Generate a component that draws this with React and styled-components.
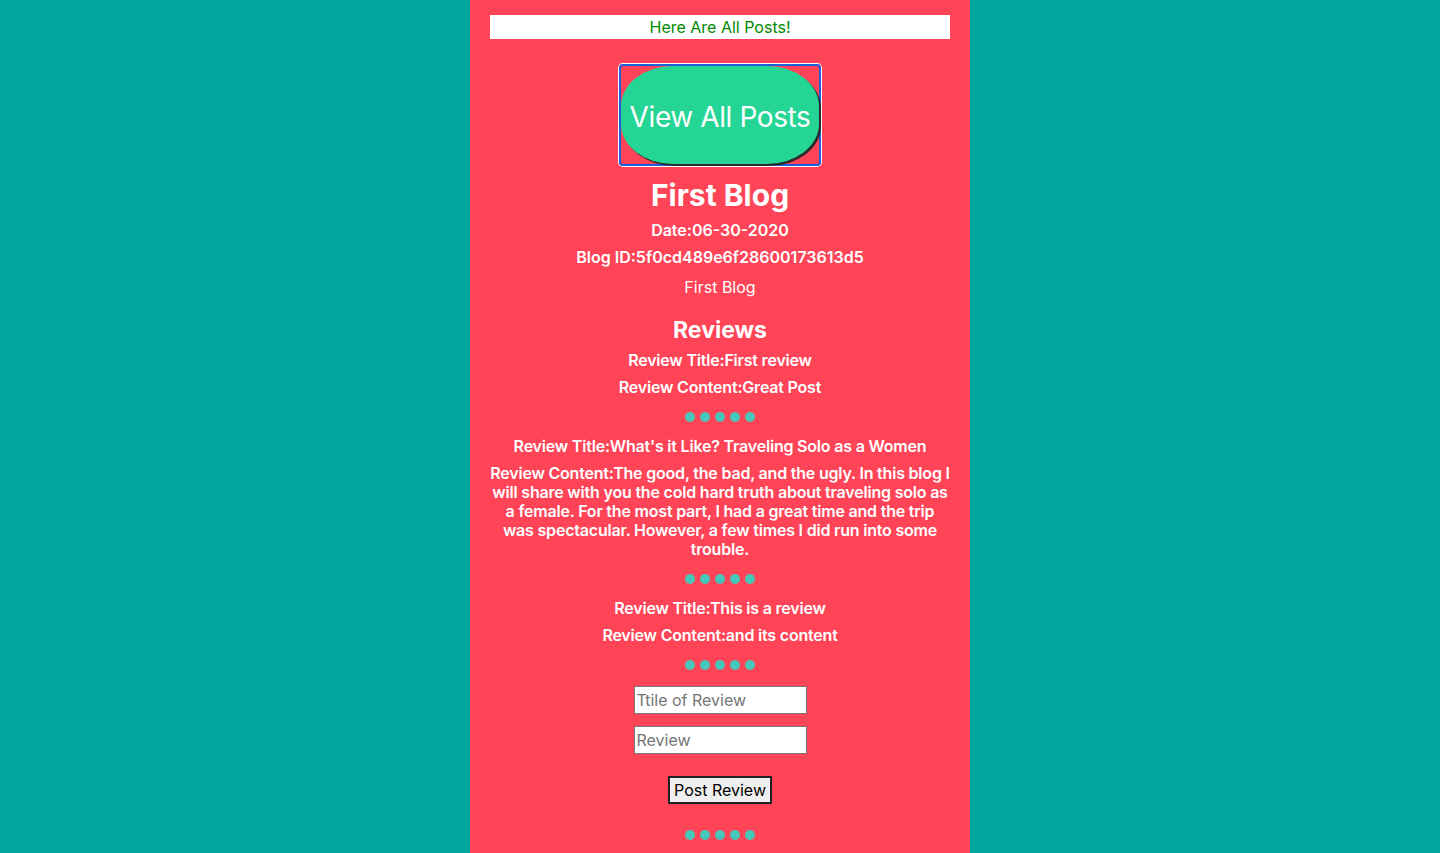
import styled, { createGlobalStyle } from 'styled-components';

const GlobalStyle = createGlobalStyle`
    html, body {
        margin: 0;
        padding: 0;
        background-color: #00a69d;
        font-family: Inter, "Noto Sans", sans-serif;
    }
`;

const Column = styled.main`
    width: 500px;
    min-height: 853px;
    margin: 0 auto;
    padding: 15px 20px 10px;
    box-sizing: border-box;
    background-color: #ff4457;
    display: flex;
    flex-direction: column;
    align-items: center;
    text-align: center;
    color: #ffffff;
`;

const Banner = styled.div`
    width: 100%;
    height: 24px;
    line-height: 24px;
    background-color: #ffffff;
    color: #008a00;
    font-size: 16px;
`;

const FocusRing = styled.div`
    margin-top: 25px;
    padding: 0;
    border: 2px solid #1d5fd8;
    border-radius: 4px;
    box-shadow: 0 0 0 1px #ffffff;
    display: flex;
`;

const ViewButton = styled.button`
    width: 198px;
    height: 98px;
    border: none;
    border-radius: 52px / 40px;
    background-color: #25d595;
    box-shadow: 2px 2px 0 #2a2a2a;
    color: #ffffff;
    font-family: Inter, "Noto Sans", sans-serif;
    font-size: 28px;
    letter-spacing: -0.4px;
    padding: 4px 0 0;
    cursor: pointer;
`;

const BlogTitle = styled.h1`
    margin: 11px 0 0;
    font-size: 30px;
    line-height: 36px;
    font-weight: 700;
`;

const Line = styled.p`
    margin: ${p => p.$top || 7}px 0 0;
    font-size: 16px;
    line-height: 20px;
    font-weight: ${p => (p.$bold ? 600 : 400)};
`;

const ReviewsHeading = styled.h2`
    margin: 19px 0 0;
    font-size: 23px;
    line-height: 29px;
    font-weight: 700;
`;

const Review = styled.section`
    display: flex;
    flex-direction: column;
    align-items: center;
    width: 100%;
`;

const ReviewText = styled.p`
    margin: ${p => p.$top}px 0 0;
    font-size: 16px;
    line-height: 19px;
    font-weight: 600;
    letter-spacing: -0.2px;
`;

const Dots = styled.div`
    display: flex;
    gap: 5px;
    margin-top: ${p => p.$top || 15}px;
`;

const Dot = styled.span`
    width: 10px;
    height: 10px;
    border-radius: 50%;
    background-color: #47c7b9;
`;

const Form = styled.form`
    display: flex;
    flex-direction: column;
    align-items: center;
    margin-top: 16px;
`;

const Input = styled.input`
    width: 173px;
    height: 28px;
    box-sizing: border-box;
    border: 1px solid #767676;
    padding: 1px 2px;
    font-family: Inter, "Noto Sans", sans-serif;
    font-size: 16px;
    margin-top: ${p => p.$top || 0}px;
    background: #ffffff;

    &::placeholder {
        color: #757575;
    }
`;

const SubmitButton = styled.button`
    margin-top: 22px;
    width: 104px;
    height: 28px;
    box-sizing: border-box;
    border: 2px solid #222222;
    background-color: #efefef;
    color: #000000;
    font-family: Inter, "Noto Sans", sans-serif;
    font-size: 16px;
    padding: 0;
`;

const reviews = [
    { title: 'First review', content: 'Great Post' },
    { title: "What's it Like? Traveling Solo as a Women", content: 'The good, the bad, and the ugly. In this blog I will share with you the cold hard truth about traveling solo as a female. For the most part, I had a great time and the trip was spectacular. However, a few times I did run into some trouble.' },
    { title: 'This is a review', content: 'and its content' },
];

const DotRow = ({ top }) => (
    <Dots $top={top}>
        {[0, 1, 2, 3, 4].map(i => <Dot key={i} />)}
    </Dots>
);

const App = () => {
    return (
        <>
            <GlobalStyle />
            <Column>
                <Banner>Here Are All Posts!</Banner>
                <FocusRing>
                    <ViewButton>View All Posts</ViewButton>
                </FocusRing>

                <BlogTitle>First Blog</BlogTitle>
                <Line $bold $top={7}>Date:06-30-2020</Line>
                <Line $bold>Blog ID:5f0cd489e6f28600173613d5</Line>
                <Line $top={10}>First Blog</Line>

                <ReviewsHeading>Reviews</ReviewsHeading>
                {reviews.map((r, i) => (
                    <Review key={r.title}>
                        <ReviewText $top={i === 0 ? 6 : 15}>{`Review Title:${r.title}`}</ReviewText>
                        <ReviewText $top={8}>{`Review Content:${r.content}`}</ReviewText>
                        <DotRow top={15} />
                    </Review>
                ))}

                <Form onSubmit={e => e.preventDefault()}>
                    <Input placeholder="Ttile of Review" />
                    <Input $top={12} placeholder="Review" />
                    <SubmitButton type="submit">Post Review</SubmitButton>
                </Form>
                <DotRow top={26} />
            </Column>
        </>
    );
};

export default App;
